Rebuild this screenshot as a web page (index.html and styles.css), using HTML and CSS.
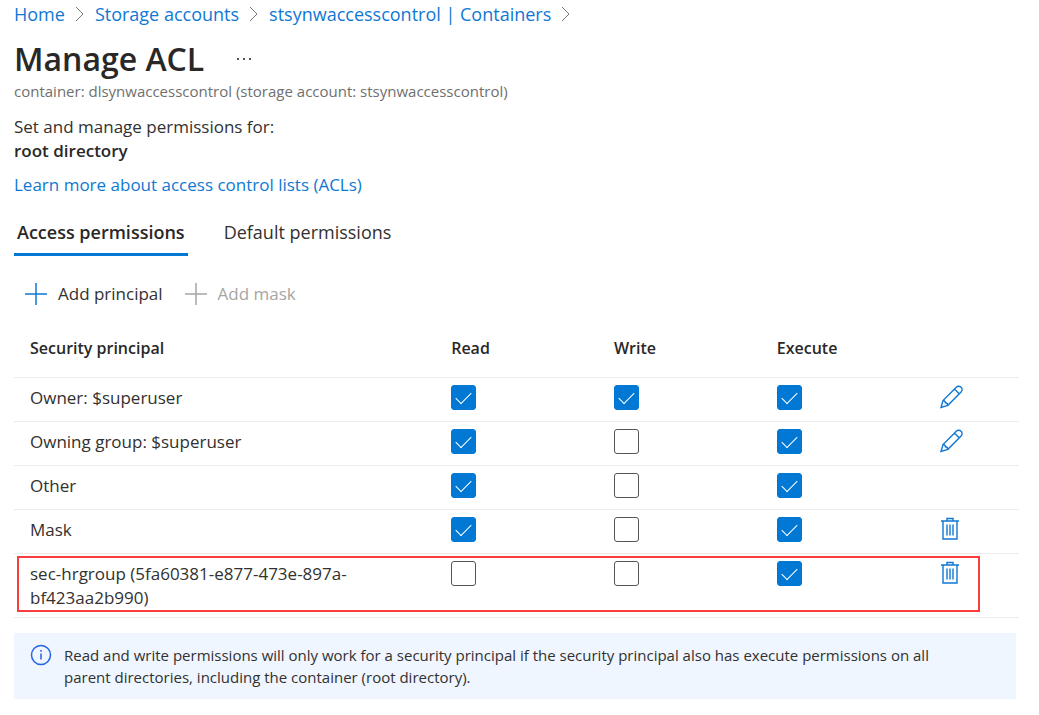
FILE: index.html
```html
<!DOCTYPE html>
<html lang="en">
<head>
  <meta charset="UTF-8">
  <title>Manage ACL</title>
  <link rel="stylesheet" href="styles.css">
</head>
<body>
  <svg class="sprite" aria-hidden="true">
    <symbol id="chevron" viewBox="0 0 10 16"><path d="M1 1l7 7-7 7"/></symbol>
    <symbol id="plus" viewBox="0 0 22 22"><path d="M11 0v22M0 11h22"/></symbol>
    <symbol id="pencil" viewBox="0 0 24 24">
      <path d="M1 22.500l2-7L16.300 2.200a3.300 3.300 0 0 1 4.800 4.800L7.900 20.300z M14.500 4l4.900 4.900 M3 15.500c1.800.2 2.300.8 2.400 2.300 1.500.1 2.200.8 2.500 2.500"/>
    </symbol>
    <symbol id="trash" viewBox="0 0 18 24">
      <path d="M0 4h18M6 4V1.500h6V4M2 4v18h14V4M6 7.500v11M9 7.500v11M12 7.500v11"/>
    </symbol>
  </svg>

  <nav class="breadcrumb">
    <a href="#">Home</a>
    <svg class="chevron"><use href="#chevron"/></svg>
    <a href="#">Storage accounts</a>
    <svg class="chevron"><use href="#chevron"/></svg>
    <a href="#">stsynwaccesscontrol | Containers</a>
    <svg class="chevron"><use href="#chevron"/></svg>
  </nav>

  <header class="title">
    <h1>Manage ACL</h1>
    <button class="more" type="button" aria-label="More"><svg viewBox="0 0 16 4"><path d="M1 1h2v2H1zM7 1h2v2H7zM13 1h2v2h-2z"/></svg></button>
  </header>
  <p class="subtitle">container: dlsynwaccesscontrol (storage account: stsynwaccesscontrol)</p>

  <p class="scope">Set and manage permissions for:<br><strong>root directory</strong></p>
  <p class="learn"><a href="#">Learn more about access control lists (ACLs)</a></p>

  <div class="tabs" role="tablist">
    <button class="tab active" type="button" role="tab" aria-selected="true">Access permissions</button>
    <button class="tab" type="button" role="tab" aria-selected="false">Default permissions</button>
  </div>

  <div class="commands">
    <button class="command" type="button"><svg><use href="#plus"/></svg>Add principal</button>
    <button class="command" type="button" disabled><svg><use href="#plus"/></svg>Add mask</button>
  </div>

  <table class="acl">
    <thead>
      <tr>
        <th class="principal">Security principal</th><th>Read</th><th>Write</th><th>Execute</th><th class="actions"></th>
      </tr>
    </thead>
    <tbody>
      <tr>
        <td class="principal">Owner: $superuser</td>
        <td><input type="checkbox" aria-label="Read" checked></td>
        <td><input type="checkbox" aria-label="Write" checked></td>
        <td><input type="checkbox" aria-label="Execute" checked></td>
        <td><button class="icon" type="button" aria-label="Edit"><svg class="pencil"><use href="#pencil"/></svg></button></td>
      </tr>
      <tr>
        <td class="principal">Owning group: $superuser</td>
        <td><input type="checkbox" aria-label="Read" checked></td>
        <td><input type="checkbox" aria-label="Write"></td>
        <td><input type="checkbox" aria-label="Execute" checked></td>
        <td><button class="icon" type="button" aria-label="Edit"><svg class="pencil"><use href="#pencil"/></svg></button></td>
      </tr>
      <tr>
        <td class="principal">Other</td>
        <td><input type="checkbox" aria-label="Read" checked></td>
        <td><input type="checkbox" aria-label="Write"></td>
        <td><input type="checkbox" aria-label="Execute" checked></td>
        <td></td>
      </tr>
      <tr>
        <td class="principal">Mask</td>
        <td><input type="checkbox" aria-label="Read" checked></td>
        <td><input type="checkbox" aria-label="Write"></td>
        <td><input type="checkbox" aria-label="Execute" checked></td>
        <td><button class="icon" type="button" aria-label="Delete"><svg class="trash"><use href="#trash"/></svg></button></td>
      </tr>
      <tr class="marked">
        <td class="principal">sec-hrgroup (5fa60381-e877-473e-897a-bf423aa2b990)</td>
        <td><input type="checkbox" aria-label="Read"></td>
        <td><input type="checkbox" aria-label="Write"></td>
        <td><input type="checkbox" aria-label="Execute" checked></td>
        <td><button class="icon" type="button" aria-label="Delete"><svg class="trash"><use href="#trash"/></svg></button></td>
      </tr>
    </tbody>
  </table>

  <div class="info">
    <svg viewBox="0 0 22 22"><circle cx="11" cy="11" r="9.500"/><path d="M11 9.500v6M11 6v1.800"/></svg>
    <p>Read and write permissions will only work for a security principal if the security principal also has execute permissions on all parent directories, including the container (root directory).</p>
  </div>
</body>
</html>
```

FILE: styles.css
```css
* { box-sizing: border-box; }
body { margin: 0; padding: 2px 20px 16px 14px; background: #fff; color: #323130; font-family: "Open Sans", sans-serif; font-size: 17px; line-height: 24px; }
h1, p { margin: 0; }
a { color: #0f78d4; text-decoration: none; }
strong, th { font-weight: 600; color: #292827; }
button { border: 0; padding: 0; background: none; font: inherit; color: inherit; cursor: pointer; }
svg { display: block; flex: none; fill: none; stroke: currentColor; }
.sprite { position: absolute; width: 0; height: 0; }

.breadcrumb { display: flex; align-items: center; gap: 10px; font-size: 18px; }
.chevron { width: 10px; height: 16px; color: #777; }

.title { display: flex; align-items: center; gap: 32px; margin-top: 13px; }
h1 { font-size: 32px; line-height: 40px; font-weight: 600; color: #292827; }
.more svg { width: 16px; height: 4px; fill: #555; stroke: none; }
.subtitle { color: #706f6e; font-size: 15px; }

.scope { margin-top: 12px; }
.learn { margin-top: 10px; }

.tabs { display: flex; gap: 33px; margin-top: 12px; font-size: 18px; }
.tab { padding: 11px 3px 9px; border-bottom: 3px solid transparent; }
.tab.active { border-color: #0078d4; font-weight: 600; color: #292827; }

.commands { display: flex; gap: 22px; margin-top: 26px; padding-left: 11px; }
.command { display: flex; align-items: center; gap: 11px; }
.command svg { width: 22px; height: 22px; color: #0f78d4; stroke-width: 1.5; }
.command:disabled, .command:disabled svg { color: #a6a5a3; }

.acl { width: 100%; margin-top: 20px; table-layout: fixed; border-collapse: separate; border-spacing: 0; }
th, td { padding: 0; border-bottom: 1px solid #ececec; text-align: left; vertical-align: top; width: 16.2%; }
th { padding: 10px 0 17px; font-size: 16px; }
td { height: 44px; padding: 7px 0; }
.principal { width: 43.5%; padding-left: 16px; padding-right: 90px; }
td.principal { padding-top: 8px; }
.actions { width: auto; }

input[type="checkbox"] { display: block; appearance: none; width: 25px; height: 25px; margin: 0; border: 1px solid #555; border-radius: 3px; background: #fff; }
input[type="checkbox"]:checked { border-color: #0078d4; background: #0078d4; }
input[type="checkbox"]:checked::before { content: ""; display: block; width: 14px; height: 7px; margin: 6px 4px; border: solid #fff; border-width: 0 0 1px 1px; transform: rotate(-45deg); }

.icon { display: block; color: #0f78d4; stroke-width: 1.4; }
.pencil { width: 24px; height: 24px; }
.trash { width: 18px; height: 24px; margin-left: 1px; }

/* red frame round the group that was added */
.marked { position: relative; }
.marked .principal::after { content: ""; position: absolute; top: 2px; right: 39px; bottom: 6px; left: 3px; border: 2px solid #f93c3c; }

.info { display: flex; gap: 12px; margin: 15px 3px 0 0; padding: 11px 50px 11px 16px; background: #eff6ff; font-size: 15px; line-height: 22px; }
.info svg { width: 22px; height: 22px; color: #2266e3; stroke-width: 1.500; }
```
